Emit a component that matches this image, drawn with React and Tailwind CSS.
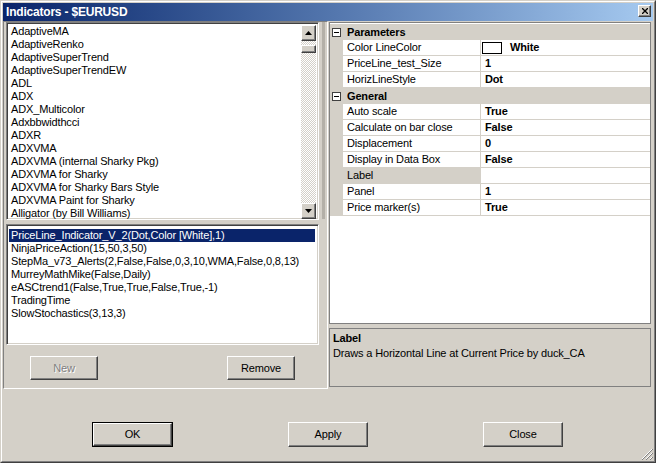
import React from 'react';

const indicators = [
  'AdaptiveMA',
  'AdaptiveRenko',
  'AdaptiveSuperTrend',
  'AdaptiveSuperTrendEW',
  'ADL',
  'ADX',
  'ADX_Multicolor',
  'Adxbbwidthcci',
  'ADXR',
  'ADXVMA',
  'ADXVMA (internal Sharky Pkg)',
  'ADXVMA for Sharky',
  'ADXVMA for Sharky Bars Style',
  'ADXVMA Paint for Sharky',
  'Alligator (by Bill Williams)',
];

const applied = [
  'PriceLine_Indicator_V_2(Dot,Color [White],1)',
  'NinjaPriceAction(15,50,3,50)',
  'StepMa_v73_Alerts(2,False,False,0,3,10,WMA,False,0,8,13)',
  'MurreyMathMike(False,Daily)',
  'eASCtrend1(False,True,True,False,True,-1)',
  'TradingTime',
  'SlowStochastics(3,13,3)',
];

const props = [
  { cat: 'Parameters' },
  { name: 'Color LineColor', value: 'White', swatch: true },
  { name: 'PriceLine_test_Size', value: '1' },
  { name: 'HorizLineStyle', value: 'Dot' },
  { cat: 'General' },
  { name: 'Auto scale', value: 'True' },
  { name: 'Calculate on bar close', value: 'False' },
  { name: 'Displacement', value: '0' },
  { name: 'Display in Data Box', value: 'False' },
  { name: 'Label', value: '', selected: true },
  { name: 'Panel', value: '1' },
  { name: 'Price marker(s)', value: 'True' },
];

const raised =
  'border border-t-white border-l-white border-r-[#404040] border-b-[#404040] shadow-[inset_-1px_-1px_0_#808080] bg-[#d4d0c8]';
const sunken =
  'border border-t-[#808080] border-l-[#808080] border-r-white border-b-white shadow-[inset_1px_1px_0_#404040,inset_-1px_-1px_0_#d4d0c8]';

const Button = ({ children, className = '', disabled, isDefault }) => {
  const inner = (
    <div
      className={`${raised} h-full w-full flex items-center justify-center ${
        disabled ? 'text-[#808080] [text-shadow:1px_1px_0_#ffffff]' : 'text-black'
      }`}
    >
      {children}
    </div>
  );
  if (isDefault) {
    return <div className={`border border-black ${className}`}>{inner}</div>;
  }
  return <div className={className}>{inner}</div>;
};

const Arrow = ({ up }) => (
  <svg width="7" height="4" viewBox="0 0 7 4">
    <path d={up ? 'M3.5 0 L7 4 L0 4 Z' : 'M0 0 L7 0 L3.5 4 Z'} fill="#000" />
  </svg>
);

const MinusBox = () => (
  <div className="w-[9px] h-[9px] border border-[#404040] bg-white flex items-center justify-center">
    <div className="w-[5px] h-px bg-black" />
  </div>
);

export default function App() {
  return (
    <div className="w-[656px] h-[463px] border border-t-[#d4d0c8] border-l-[#d4d0c8] border-r-[#404040] border-b-[#404040] bg-[#d4d0c8] font-['Liberation_Sans',Arial,sans-serif] text-[11px] leading-[13px] tracking-[-0.15px] text-black select-none">
      <div className="h-full border border-t-white border-l-white border-r-[#808080] border-b-[#808080] p-px flex flex-col relative">
        {/* title bar */}
        <div className="h-[18px] shrink-0 bg-gradient-to-r from-[#0a246a] to-[#a6caf0] flex items-start justify-between pl-[3px] pr-[2px]">
          <span className="text-white font-bold text-[12px] leading-[18px] tracking-[-0.2px]">Indicators - $EURUSD</span>
          <div className={`${raised} mt-[2px] w-[13px] h-[12px] flex items-center justify-center`}>
            <svg width="6" height="6" viewBox="0 0 6 6">
              <path d="M0 0 L6 6 M6 0 L0 6" stroke="#000" strokeWidth="1.3" />
            </svg>
          </div>
        </div>

        {/* main */}
        <div className="h-[368px] shrink-0 flex">
          {/* left panel */}
          <div className="w-[325px] border border-t-[#808080] border-l-[#808080] border-r-white border-b-white pl-[2px] flex flex-col">
            <div className="flex">
              {/* indicators list */}
              <div className={`${sunken} w-[313px] h-[198px] bg-white flex pt-[2px] pl-[2px] pr-[2px] overflow-hidden`}>
                <div className="flex-1 pl-[2px]">
                  {indicators.map((t) => (
                    <div key={t} className="h-[13px] whitespace-nowrap">
                      {t}
                    </div>
                  ))}
                </div>
                <div className="w-[15px] h-[194px] flex flex-col bg-[repeating-conic-gradient(#d4d0c8_0_25%,#ffffff_0_50%)] bg-[length:2px_2px]">
                  <div className={`${raised} h-[16px] shrink-0 flex items-center justify-center`}>
                    <Arrow up />
                  </div>
                  <div className="h-[4px] shrink-0" />
                  <div className={`${raised} h-[8px] shrink-0`} />
                  <div className="flex-1" />
                  <div className={`${raised} h-[16px] shrink-0 flex items-center justify-center`}>
                    <Arrow />
                  </div>
                </div>
              </div>
              <div className="ml-[3px] w-[3px] h-[197px] bg-[#b4b0a8]" />
            </div>

            {/* applied list */}
            <div className={`${sunken} mt-[4px] w-[313px] h-[121px] bg-white p-[2px]`}>
              <div className="pt-[2px]">
                {applied.map((t, i) => (
                  <div
                    key={t}
                    className={`h-[13px] pl-[2px] whitespace-nowrap ${
                      i === 0 ? 'bg-[#0a246a] text-white mr-px' : ''
                    }`}
                  >
                    {t}
                  </div>
                ))}
              </div>
            </div>

            <div className="mt-[11px] w-[313px] flex justify-between pl-[24px] pr-[24px]">
              <Button className="w-[68px] h-[24px]" disabled>
                New
              </Button>
              <Button className="w-[68px] h-[24px]">Remove</Button>
            </div>
          </div>

          {/* right panel */}
          <div className="w-[322px] ml-px pt-px flex flex-col">
            <div className="h-[302px] border border-[#808080] bg-white overflow-hidden">
              <div className="pt-px">
                {props.map((p) =>
                  p.cat ? (
                    <div key={p.cat} className="h-[16px] bg-[#d4d0c8] flex items-center">
                      <div className="w-[13px] flex justify-center">
                        <MinusBox />
                      </div>
                      <span className="pl-[4px] font-bold">{p.cat}</span>
                    </div>
                  ) : (
                    <div key={p.name} className="h-[16px] flex">
                      <div className="w-[13px] bg-[#d4d0c8]" />
                      <div
                        className={`w-[138px] border-b border-r border-[#d4d0c8] pl-[4px] flex items-center whitespace-nowrap ${
                          p.selected ? 'bg-[#d4d0c8]' : ''
                        }`}
                      >
                        {p.name}
                      </div>
                      <div className="flex-1 border-b border-[#d4d0c8] pl-[4px] flex items-center font-bold">
                        {p.swatch && (
                          <div className="-ml-[3px] mr-[8px] w-[20px] h-[12px] border border-black bg-white" />
                        )}
                        {p.value}
                      </div>
                    </div>
                  )
                )}
              </div>
            </div>
            <div className="mt-[4px] h-[59px] border border-[#808080] bg-[#d4d0c8] px-[3px] pt-[3px]">
              <div className="font-bold">Label</div>
              <div className="mt-[2px]">Draws a Horizontal Line at Current Price by duck_CA</div>
            </div>
          </div>
        </div>

        {/* bottom buttons */}
        <div className="flex-1 flex items-start pt-[33px] pl-[89px] gap-[115px]">
          <Button className="w-[81px] h-[25px]" isDefault>
            OK
          </Button>
          <Button className="w-[80px] h-[25px]">Apply</Button>
          <Button className="w-[80px] h-[25px]">Close</Button>
        </div>

        {/* size grip */}
        <svg className="absolute right-px bottom-px" width="12" height="12" viewBox="0 0 12 12">
          <path d="M11 1 L1 11 M11 5 L5 11 M11 9 L9 11" stroke="#ffffff" strokeWidth="1" />
          <path d="M12 1 L1 12 M12 5 L5 12 M12 9 L9 12" stroke="#808080" strokeWidth="1" />
        </svg>
      </div>
    </div>
  );
}
